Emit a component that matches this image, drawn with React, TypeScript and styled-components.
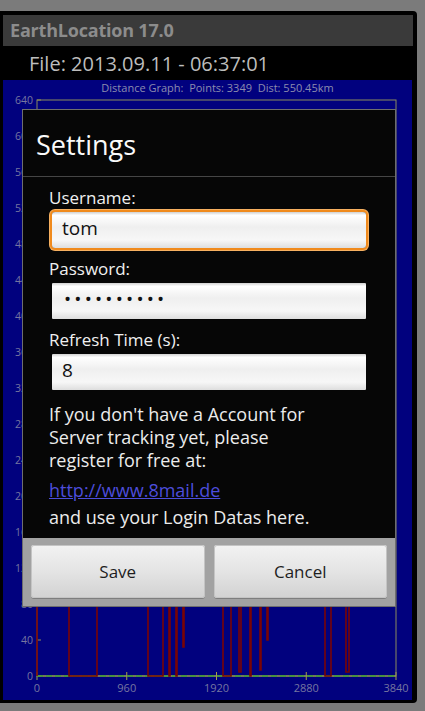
import styled, { createGlobalStyle } from "styled-components";

const GlobalStyle = createGlobalStyle`
  html, body {
    margin: 0;
    padding: 0;
    background: #7b7b7b;
  }
  body {
    font-family: "Open Sans", "Noto Sans", sans-serif;
  }
  * {
    box-sizing: border-box;
  }
`;

// plot area in page coordinates (the chart svg uses a matching viewBox)
const PLOT = { left: 37, right: 396, top: 100, bottom: 676 };
const Y_LABELS = [640, 600, 560, 520, 480, 440, 400, 360, 320, 280, 240, 200, 160, 120, 80, 40, 0];
const X_LABELS = [0, 960, 1920, 2880, 3840];

const yOf = (v: number) => PLOT.bottom - (v / 640) * (PLOT.bottom - PLOT.top);
const xOf = (v: number) => PLOT.left + (v / 3840) * (PLOT.right - PLOT.left);

// distance data: mostly high (behind the dialog), with drops towards 0
const HIGH = 300;
const DROPS: [number, number, number][] = [
  [69, 97, 676],
  [148, 163, 676],
  [169, 170, 676],
  [176, 177, 676],
  [183, 184, 647],
  [223, 231, 676],
  [239, 241, 672],
  [250, 251, 676],
  [260, 261, 670],
  [267, 268, 640],
  [325, 331, 676],
  [346, 349, 672],
];

const buildPath = () => {
  let d = `M37 676 L37 ${HIGH}`;
  DROPS.forEach(([x1, x2, y]) => {
    d += ` L${x1} ${HIGH} L${x1} ${y} L${x2} ${y} L${x2} ${HIGH}`;
  });
  d += ` L396 ${HIGH}`;
  return d;
};

const App = () => {
  return (
    <>
      <GlobalStyle />
      <Page>
        <Frame>
          <TitleBar>EarthLocation 17.0</TitleBar>
          <FileLine>File: 2013.09.11 - 06:37:01</FileLine>
          <GraphPanel>
            <Caption>Distance Graph:&nbsp; Points: 3349&nbsp; Dist: 550.45km</Caption>
            <Chart viewBox="3 96 409 604" width={409} height={604}>
              {Y_LABELS.map((v) => (
                <g key={v}>
                  <text x={33} y={yOf(v) + 3.5} textAnchor="end" fontSize={10.5} fill="#7676a0">
                    {v}
                  </text>
                  <line x1={37} x2={41} y1={yOf(v)} y2={yOf(v)} stroke="#8c8c5c" />
                </g>
              ))}
              {X_LABELS.map((v) => (
                <g key={v}>
                  <text x={xOf(v)} y={692} textAnchor="middle" fontSize={11} fill="#7676a0">
                    {v}
                  </text>
                  <line x1={xOf(v)} x2={xOf(v)} y1={672} y2={680} stroke="#a4a44a" />
                </g>
              ))}
              <rect
                x={PLOT.left}
                y={PLOT.top}
                width={PLOT.right - PLOT.left}
                height={PLOT.bottom - PLOT.top}
                fill="none"
                stroke="#8c8c5c"
              />
              <line x1={37} x2={396} y1={676} y2={676} stroke="#a4a44a" />
              <line x1={37} x2={396} y1={676} y2={676} stroke="#3a9a3a" strokeWidth={1.5} strokeDasharray="6 3" />
              <path d={buildPath()} fill="none" stroke="#7a0404" strokeWidth={1.6} />
            </Chart>
          </GraphPanel>

          <Dialog>
            <DialogTitle>Settings</DialogTitle>
            <DialogBody>
              <FieldLabel>Username:</FieldLabel>
              <Field $focused>tom</Field>
              <FieldLabel>Password:</FieldLabel>
              <Field $password>••••••••••</Field>
              <FieldLabel>Refresh Time (s):</FieldLabel>
              <Field>8</Field>
              <InfoText>
                If you don't have a Account for
                <br />
                Server tracking yet, please
                <br />
                register for free at:
              </InfoText>
              <Link href="#">http://www.8mail.de</Link>
              <InfoText $last>and use your Login Datas here.</InfoText>
            </DialogBody>
            <ButtonBar>
              <DialogButton>Save</DialogButton>
              <DialogButton>Cancel</DialogButton>
            </ButtonBar>
          </Dialog>
        </Frame>
      </Page>
    </>
  );
};

export default App;

const Page = styled.div`
  width: 425px;
  height: 711px;
  padding-top: 11px;
  background: #7b7b7b;
  overflow: hidden;
`;

const Frame = styled.div`
  position: relative;
  width: 417px;
  height: 692px;
  padding: 0 3px;
  background: #000;
  border-radius: 0 4px 4px 0;
  display: flex;
  flex-direction: column;
`;

const TitleBar = styled.div`
  width: 410px;
  height: 31px;
  margin-top: 4px;
  padding-left: 7px;
  background: #3a3a3a;
  color: #8c8c8c;
  font-size: 18px;
  font-weight: 700;
  line-height: 31px;
  letter-spacing: -0.2px;
`;

const FileLine = styled.div`
  height: 34px;
  padding: 1px 0 0 26px;
  color: #bdbdbd;
  font-size: 20px;
  line-height: 33px;
`;

const GraphPanel = styled.div`
  width: 409px;
  height: 620px;
  background: #01017e;
  display: flex;
  flex-direction: column;
`;

const Caption = styled.div`
  height: 16px;
  padding-left: 20px;
  text-align: center;
  color: #8c8cae;
  font-size: 11px;
  line-height: 16px;
`;

const Chart = styled.svg`
  display: block;
  overflow: visible;
  font-family: "Open Sans", "Noto Sans", sans-serif;
`;

const Dialog = styled.div`
  position: absolute;
  top: 98px;
  left: 22px;
  width: 374px;
  height: 498px;
  border: 1px solid #6e6e6e;
  background: #060606;
  display: flex;
  flex-direction: column;
`;

const DialogTitle = styled.div`
  padding: 17px 13px 13px;
  border-bottom: 1px solid #454545;
  color: #fafafa;
  font-size: 27px;
  line-height: 36px;
`;

const DialogBody = styled.div`
  flex: 1;
  padding: 10px 26px 0;
  display: flex;
  flex-direction: column;
  align-items: flex-start;
`;

const FieldLabel = styled.div`
  color: #f0f0f0;
  font-size: 17px;
  line-height: 22px;
  margin-bottom: 3px;
`;

const Field = styled.div<{ $focused?: boolean; $password?: boolean }>`
  width: 314px;
  height: 36px;
  margin: 0 0 10px 3px;
  padding: 0 10px 4px;
  border-radius: ${(p) => (p.$focused ? "3px" : "1px")};
  background: linear-gradient(
    to bottom,
    #d0d0d0 0%,
    #ffffff 9%,
    #efefef 42%,
    #f7f7f7 78%,
    #dedede 100%
  );
  box-shadow: ${(p) =>
    p.$focused ? "0 0 0 2px #f08a1c, 0 0 0 3px #f6b060" : "none"};
  color: #111;
  font-size: 19px;
  line-height: 32px;
  letter-spacing: ${(p) => (p.$password ? "3.2px" : "0")};
  padding-left: ${(p) => (p.$password ? "12px" : "10px")};
`;

const InfoText = styled.div<{ $last?: boolean }>`
  margin-top: ${(p) => (p.$last ? "4px" : "3px")};
  color: #ececec;
  font-size: 18px;
  line-height: 23px;
`;

const Link = styled.a`
  margin-top: 7px;
  color: #4d4ddb;
  font-size: 18px;
  line-height: 23px;
  text-decoration: underline;
`;

const ButtonBar = styled.div`
  height: 68px;
  padding: 7px 8px 8px;
  background: #a2a2a2;
  display: grid;
  grid-template-columns: 1fr 1fr;
  gap: 9px;
`;

const DialogButton = styled.button`
  display: flex;
  align-items: center;
  justify-content: center;
  border: none;
  border-radius: 3px;
  background: linear-gradient(to bottom, #f2f2f2 0%, #e4e4e4 50%, #d2d2d2 100%);
  box-shadow: 0 1px 0 #7e7e7e, inset 0 0 0 1px #c4c4c4;
  color: #1e1e1e;
  font-family: "Open Sans", "Noto Sans", sans-serif;
  font-size: 17px;
  padding: 0;
`;
